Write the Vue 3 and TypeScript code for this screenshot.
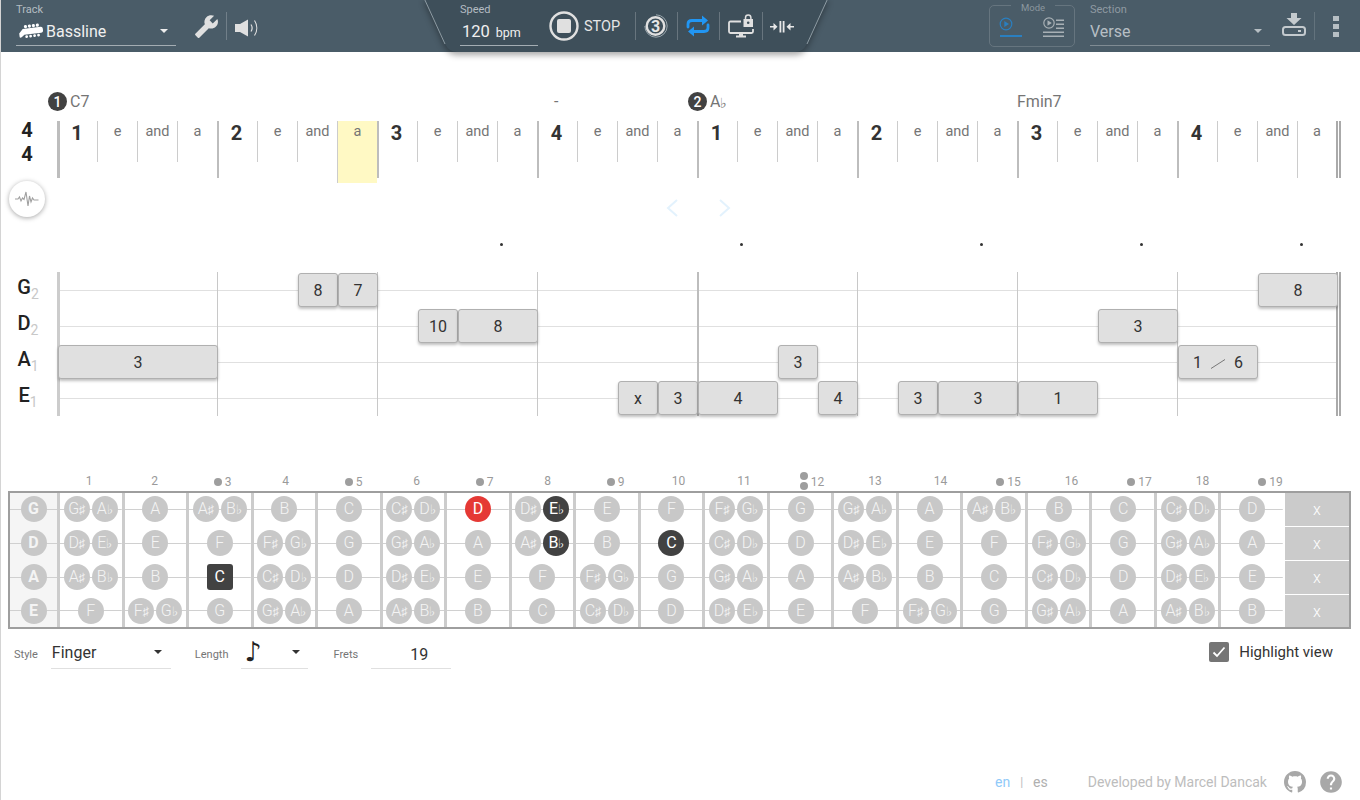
<script setup lang="ts">
const subdivisions = ['', 'e', 'and', 'a']
const beatCells = Array.from({ length: 32 }, (_, i) => ({
  text: i % 4 === 0 ? String((i / 4) % 4 + 1) : subdivisions[i % 4],
  strong: i % 4 === 0,
  first: i === 0,
  last: i === 31,
  current: i === 7
}))

const dots = [11, 17, 23, 27, 31]

const strings = [
  { name: 'G', octave: 2, open: 7 },
  { name: 'D', octave: 2, open: 2 },
  { name: 'A', octave: 1, open: 9 },
  { name: 'E', octave: 1, open: 4 }
]

const tabNotes = [
  { row: 0, col: 6, span: 1, text: '8' },
  { row: 0, col: 7, span: 1, text: '7' },
  { row: 0, col: 30, span: 2, text: '8' },
  { row: 1, col: 9, span: 1, text: '10' },
  { row: 1, col: 10, span: 2, text: '8' },
  { row: 1, col: 26, span: 2, text: '3' },
  { row: 2, col: 0, span: 4, text: '3' },
  { row: 2, col: 18, span: 1, text: '3' },
  { row: 2, col: 28, span: 2, text: '1', slide: '6' },
  { row: 3, col: 14, span: 1, text: 'x' },
  { row: 3, col: 15, span: 1, text: '3' },
  { row: 3, col: 16, span: 2, text: '4' },
  { row: 3, col: 19, span: 1, text: '4' },
  { row: 3, col: 21, span: 1, text: '3' },
  { row: 3, col: 22, span: 2, text: '3' },
  { row: 3, col: 24, span: 2, text: '1' }
]

const scale = [
  ['C'], ['C#', 'Db'], ['D'], ['D#', 'Eb'], ['E'], ['F'],
  ['F#', 'Gb'], ['G'], ['G#', 'Ab'], ['A'], ['A#', 'Bb'], ['B']
]

// string-fret-note => style of the marked note
const marked: Record<string, string> = {
  '0-7-D': 'red',
  '0-8-Eb': 'dark',
  '1-8-Bb': 'dark',
  '1-10-C': 'dark',
  '2-3-C': 'dark square'
}

function pretty(acc: string) {
  return acc === '#' ? '♯' : '♭'
}

const frets = Array.from({ length: 19 }, (_, i) => i + 1)
const singleDots = [3, 5, 7, 9, 15, 17, 19]

const boardRows = strings.map((s, row) => ({
  name: s.name,
  frets: frets.map((fret) => ({
    fret,
    notes: scale[(s.open + fret) % 12].map((n) => ({
      letter: n[0],
      acc: n[1] ? pretty(n[1]) : '',
      cls: marked[`${row}-${fret}-${n}`] || ''
    }))
  }))
}))
</script>

<template>
  <div class="page">
    <header class="topbar">
      <div class="bar-left">
        <div class="field track">
          <span class="field-label">Track</span>
          <div class="field-value">
            <svg class="bass" width="26" height="18" viewBox="0 0 26 18">
              <g fill="#fff" transform="rotate(-7 13 9)">
                <path d="M1 10 L5 6 H23 Q25 6 25 8 V10 Q25 12 23 12 H6 L3 14 Q1 15 1 13 Z" />
                <circle cx="8" cy="4" r="1.6" /><circle cx="12" cy="4" r="1.6" />
                <circle cx="16" cy="4" r="1.6" /><circle cx="20" cy="4" r="1.6" />
                <circle cx="8" cy="14" r="1.4" /><circle cx="12" cy="14" r="1.4" />
                <circle cx="16" cy="14" r="1.4" /><circle cx="20" cy="14" r="1.4" />
              </g>
            </svg>
            <span>Bassline</span>
            <i class="caret"></i>
          </div>
        </div>
        <svg class="wrench" width="25" height="25" viewBox="0 0 24 24">
          <path fill="#e0e0e0" transform="translate(24 0) scale(-1 1)" d="M22.7 19l-9.1-9.1c.9-2.3.4-5-1.5-6.9-2-2-5-2.4-7.4-1.3L9 6 6 9 1.6 4.7C.4 7.1.9 10.1 2.9 12.1c1.9 1.9 4.6 2.4 6.9 1.5l9.1 9.1c.4.4 1 .4 1.4 0l2.3-2.3c.5-.4.5-1.1.1-1.4z" />
        </svg>
        <span class="sep left-sep"></span>
        <svg class="speaker" width="24" height="24" viewBox="0 0 24 24">
          <path fill="#e0e0e0" d="M0 10h5l8-4.500v17L5 18H0z" />
          <path fill="none" stroke="#e0e0e0" stroke-width="1.200" d="M16 10.500c1.500 2.300 1.500 4.700 0 7M19.500 6.500c3 4.500 3 10.500 0 15" />
        </svg>
      </div>

      <div class="bar-center">
        <svg class="center-shape" width="408" height="54" viewBox="0 0 408 54">
          <path fill="#3e4f5a" d="M2 -2 L23 44 Q27 52 35 52 H373 Q381 52 385 44 L406 -2 Z" />
          <path fill="none" stroke="#8d9ba3" stroke-width="1" d="M2 -2 L23 44 M385 44 L406 -2" />
        </svg>
        <div class="field speed">
          <span class="field-label">Speed</span>
          <div class="field-value"><span>120</span><small>bpm</small></div>
        </div>
        <svg class="stop" width="30" height="30" viewBox="0 0 30 30">
          <circle cx="15" cy="15" r="13.500" fill="none" stroke="#e0e0e0" stroke-width="2.400" />
          <rect x="8" y="8" width="14" height="14" rx="2" fill="#e0e0e0" />
        </svg>
        <span class="stop-text">STOP</span>
        <span class="sep s1"></span>
        <svg class="count" width="24" height="24" viewBox="0 0 24 24">
          <path fill="none" stroke="#9aa6ad" stroke-width="1" d="M12 .8A11.200 11.200 0 1 1 .8 12" />
          <circle cx="11.500" cy="12" r="8.800" fill="none" stroke="#e0e0e0" stroke-width="2.400" />
          <text x="11.500" y="17.500" text-anchor="middle" class="count-text">3</text>
        </svg>
        <span class="sep s2"></span>
        <svg class="repeat" width="24" height="24" viewBox="0 0 24 24">
          <path fill="none" stroke="#2196f3" stroke-width="2.800" stroke-linecap="round" d="M2 13V10Q2 6.500 6 6.500H17M22 11V14Q22 17.500 18 17.500H7" />
          <path fill="#2196f3" d="M16 1.500 22 6.500 16 11.500zM8 12.500 2 17.500 8 22.500z" />
        </svg>
        <span class="sep s3"></span>
        <svg class="lock" width="26" height="24" viewBox="0 0 26 24">
          <path fill="none" stroke="#e0e0e0" stroke-width="1.800" d="M13 7.500H2.500Q1 7.500 1 9V17.500Q1 19 2.500 19H23.500Q25 19 25 17.500V15" />
          <path fill="#e0e0e0" d="M11 19h4v2.500h3V23.500H8v-2h3z" />
          <path fill="none" stroke="#e0e0e0" stroke-width="1.500" d="M17.500 5V3.800a2.700 2.700 0 0 1 5.400 0V5" />
          <path fill="#e0e0e0" fill-rule="evenodd" d="M15.500 5h9.500v8h-9.500zM20.200 7.400a1.300 1.300 0 1 0 0 2.600 1.300 1.300 0 0 0 0-2.600z" />
        </svg>
        <span class="sep s4"></span>
        <svg class="squeeze" width="24" height="24" viewBox="0 0 24 24">
          <path fill="#e8e8e8" d="M0 12h3.500V9l4 3.750-4 3.750v-3H0zM24 12h-3.500V9l-4 3.750 4 3.750v-3H24zM9.500 7h1.800v11.500H9.500zM12.700 7h1.800v11.500h-1.800z" />
        </svg>
      </div>

      <div class="bar-right">
        <div class="mode">
          <span class="mode-label">Mode</span>
          <div class="mode-item active">
            <svg width="14" height="14" viewBox="0 0 14 14">
              <circle cx="7" cy="7" r="5.800" fill="none" stroke="#2a7fc0" stroke-width="1.200" />
              <path fill="#2a7fc0" d="M5.300 4 10 7l-4.700 3z" />
            </svg>
          </div>
          <div class="mode-item">
            <svg width="22" height="22" viewBox="0 0 22 22">
              <circle cx="6" cy="7" r="5.200" fill="none" stroke="#a8b0b5" stroke-width="1.200" />
              <path fill="#a8b0b5" d="M4.500 4.300 8.800 7l-4.300 2.700zM13 3.500h8V5h-8zM13 7.500h8V9h-8zM13 11.500h8V13h-8zM0 15.500h21V17H0zM0 19.500h21V21H0z" />
            </svg>
          </div>
        </div>
        <div class="field section">
          <span class="field-label">Section</span>
          <div class="field-value"><span>Verse</span><i class="caret"></i></div>
        </div>
        <svg class="download" width="24" height="24" viewBox="0 0 24 24">
          <path fill="#c4cace" d="M9 0h6v5h4.500L12 12 4.500 5H9z" />
          <rect x="1" y="14" width="22" height="8" rx="2.500" fill="none" stroke="#c4cace" stroke-width="2" />
          <rect x="16" y="17" width="3" height="2" fill="#c4cace" />
        </svg>
        <span class="sep dim"></span>
        <div class="kebab"><i></i><i></i><i></i></div>
      </div>
    </header>

    <section class="chords">
      <span class="chord shift"><b class="num">1</b>C7</span>
      <span class="chord dash" style="grid-column: 13">-</span>
      <span class="chord shift" style="grid-column: 17"><b class="num">2</b>A<small>♭</small></span>
      <span class="chord" style="grid-column: 25 / span 3">Fmin7</span>
    </section>

    <section class="beats">
      <div class="time-sig"><span>4</span><span>4</span></div>
      <div
        v-for="(c, i) in beatCells"
        :key="i"
        class="beat"
        :class="{ strong: c.strong, first: c.first, last: c.last, current: c.current }"
      >{{ c.text }}</div>
    </section>

    <section class="tools">
      <button class="wave">
        <svg width="24" height="16" viewBox="0 0 24 16">
          <path fill="none" stroke="#a0a0a0" stroke-width="1.100" d="M0 8h3l1.500-2 1.500 4 1.500-3 1.500 1.500L11 1l2 14 1.500-10 1.500 6 1.500-4 1.500 2h4.500" />
        </svg>
      </button>
      <div class="arrows">
        <svg width="16" height="20" viewBox="0 0 16 20"><path fill="none" stroke="#e3f2fd" stroke-width="2" d="M13 2 4 10l9 8" /></svg>
        <svg width="16" height="20" viewBox="0 0 16 20"><path fill="none" stroke="#e3f2fd" stroke-width="2" d="M3 2l9 8-9 8" /></svg>
      </div>
    </section>

    <section class="dots">
      <i v-for="d in dots" :key="d" :style="{ gridColumn: d + 1 }"></i>
    </section>

    <section class="tab">
      <div
        v-for="(s, r) in strings"
        :key="s.name"
        class="string-name"
        :style="{ gridRow: r + 1 }"
      >{{ s.name }}<sub>{{ s.octave }}</sub></div>
      <div v-for="(s, r) in strings" :key="s.name + 'line'" class="string-line" :style="{ gridRow: r + 1 }"></div>
      <div
        v-for="n in 9"
        :key="n"
        class="bar-line"
        :class="{ first: n === 1, mid: n === 5, end: n === 9 }"
        :style="{ gridColumn: n === 9 ? 33 : (n - 1) * 4 + 2 }"
      ></div>
      <div
        v-for="(n, i) in tabNotes"
        :key="i"
        class="tab-note"
        :style="{ gridRow: n.row + 1, gridColumn: `${n.col + 2} / span ${n.span}` }"
      >
        <span>{{ n.text }}</span>
        <template v-if="n.slide">
          <svg class="slide" width="16" height="10" viewBox="0 0 16 10"><path stroke="#777" stroke-width="1" d="M1 9.500 15 .5" /></svg>
          <span>{{ n.slide }}</span>
        </template>
      </div>
    </section>

    <section class="fret-numbers">
      <div
        v-for="f in frets"
        :key="f"
        class="fret-number"
        :class="{ marked: singleDots.includes(f) || f === 12 }"
      >
        <i v-if="singleDots.includes(f)" class="inlay"></i>
        <span v-if="f === 12" class="double"><i class="inlay"></i><i class="inlay"></i></span>
        <span>{{ f }}</span>
      </div>
    </section>

    <section class="board">
      <div class="board-grid">
        <template v-for="(row, r) in boardRows" :key="r">
          <div class="cell open"><span class="note bold">{{ row.name }}</span></div>
          <div v-for="f in row.frets" :key="f.fret" class="cell">
            <span v-for="n in f.notes" :key="n.letter" class="note" :class="n.cls">{{ n.letter }}<small v-if="n.acc">{{ n.acc }}</small></span>
          </div>
          <div class="mute">x</div>
        </template>
      </div>
    </section>

    <section class="controls">
      <span class="ctl-label style-label">Style</span>
      <div class="ctl finger"><span>Finger</span><i class="caret dark"></i></div>
      <span class="ctl-label length-label">Length</span>
      <div class="ctl length"><span class="eighth">♪</span><i class="caret dark"></i></div>
      <span class="ctl-label frets-label">Frets</span>
      <div class="ctl frets-input">19</div>
      <label class="highlight">
        <span class="check">
          <svg width="14" height="12" viewBox="0 0 14 12"><path fill="none" stroke="#fff" stroke-width="1.800" d="M1.500 6.500 5 10l7.500-8.500" /></svg>
        </span>
        Highlight view
      </label>
    </section>

    <footer class="footer">
      <span class="lang on">en</span>
      <span class="pipe">|</span>
      <span class="lang">es</span>
      <span class="credit">Developed by Marcel Dancak</span>
      <svg width="22" height="22" viewBox="0 0 16 16">
        <path fill="#a8a8a8" d="M8 0C3.580 0 0 3.580 0 8c0 3.540 2.290 6.530 5.470 7.590.4.070.55-.17.55-.38 0-.19-.01-.82-.01-1.490-2.010.37-2.530-.49-2.690-.94-.09-.23-.48-.94-.82-1.130-.28-.15-.68-.52-.01-.53.63-.01 1.080.58 1.230.82.72 1.210 1.870.87 2.330.66.07-.52.28-.87.51-1.070-1.780-.2-3.640-.89-3.640-3.950 0-.87.31-1.590.82-2.150-.08-.2-.36-1.020.08-2.120 0 0 .67-.21 2.200.82.64-.18 1.320-.27 2-.27.68 0 1.360.09 2 .27 1.530-1.040 2.200-.82 2.200-.82.44 1.100.16 1.920.08 2.120.51.56.82 1.270.82 2.150 0 3.070-1.870 3.750-3.650 3.950.29.25.54.73.54 1.480 0 1.070-.01 1.930-.01 2.200 0 .21.15.46.55.38A8.013 8.013 0 0016 8c0-4.420-3.580-8-8-8z" />
      </svg>
      <svg class="help" width="26" height="26" viewBox="0 0 24 24">
        <path fill="#a8a8a8" d="M12 2C6.480 2 2 6.480 2 12s4.480 10 10 10 10-4.480 10-10S17.520 2 12 2zm1 17h-2v-2h2v2zm2.070-7.750l-.9.92C13.450 12.900 13 13.500 13 15h-2v-.5c0-1.100.45-2.100 1.170-2.830l1.240-1.260c.37-.36.59-.86.59-1.410 0-1.100-.9-2-2-2s-2 .9-2 2H8c0-2.210 1.790-4 4-4s4 1.790 4 4c0 .88-.36 1.680-.93 2.250z" />
      </svg>
    </footer>
  </div>
</template>

<style>
html,
body {
  margin: 0;
  background: #fff;
}
</style>

<style scoped>
.page {
  display: flex;
  flex-direction: column;
  box-sizing: border-box;
  width: 1360px;
  height: 800px;
  border-left: 1px solid #d4d4d4;
  overflow: hidden;
  font-family: Roboto, "Liberation Sans", sans-serif;
  color: #333;
}

/* top bar */
.topbar {
  display: flex;
  flex: none;
  height: 52px;
  background: #4a5c68;
  color: #fff;
  position: relative;
  z-index: 2;
}
.bar-left {
  display: flex;
  align-items: center;
  width: 421px;
  padding-left: 15px;
  box-sizing: border-box;
}
.field {
  display: flex;
  flex-direction: column;
  box-sizing: border-box;
  height: 46px;
  align-self: flex-start;
  border-bottom: 1px solid #a4adb3;
}
.field-label {
  font-size: 11px;
  line-height: 13px;
  margin-top: 3px;
  color: #b4bcc2;
}
.field-value {
  display: flex;
  align-items: center;
  flex: 1;
  padding-top: 1px;
  font-size: 16px;
  color: #f0f0f0;
}
.track {
  width: 160px;
}
.bass {
  margin: 0 2px 0 2px;
}
.caret {
  width: 0;
  height: 0;
  margin-left: auto;
  margin-right: 8px;
  border: 4px solid transparent;
  border-top: 4px solid #eee;
  border-bottom: 0;
}
.caret.dark {
  border-top-color: #333;
}
.wrench {
  margin: 0 0 0 18px;
}
.sep {
  width: 1px;
  height: 28px;
  margin: 0 8px;
  background: rgba(255, 255, 255, 0.22);
  flex: none;
}
.left-sep {
  margin: 0 8px 0 7px;
}
.bar-center {
  position: relative;
  display: flex;
  align-items: center;
  width: 408px;
  padding-left: 38px;
  box-sizing: border-box;
}
.center-shape {
  position: absolute;
  top: 0;
  left: 0;
  overflow: visible;
  filter: drop-shadow(0 3px 3px rgba(0, 0, 0, 0.35));
}
.bar-center > *:not(.center-shape) {
  position: relative;
}
.speed {
  width: 78px;
}
.speed .field-value span {
  font-size: 16.500px;
  margin-left: 2px;
}
.speed small {
  font-size: 12.500px;
  margin: 2px 0 0 6px;
}
.stop {
  margin-left: 11px;
}
.stop-text {
  margin-left: 5px;
  font-size: 14.500px;
  color: #e6e6e6;
}
.s1 {
  margin: 0 8px 0 15px;
}
.s2 {
  margin: 0 8px 0 9px;
}
.s3 {
  margin: 0 8px 0 9px;
}
.s4 {
  margin: 0 7px 0 8px;
}
.count-text {
  font-size: 16px;
  font-weight: 700;
  fill: #e6e6e6;
  font-family: Roboto, sans-serif;
}
.bar-right {
  display: flex;
  align-items: center;
  flex: 1;
  padding-left: 159px;
}
.mode {
  position: relative;
  display: flex;
  box-sizing: border-box;
  width: 86px;
  height: 42px;
  padding: 11px 9px 0 10px;
  justify-content: space-between;
  border: 1px solid #66757f;
  border-radius: 5px;
  align-self: flex-start;
  margin-top: 5px;
}
.mode-label {
  position: absolute;
  top: -3px;
  left: 21px;
  padding: 0 10px;
  background: #4a5c68;
  font-size: 9.500px;
  line-height: 10px;
  color: #8b979f;
}
.mode-item {
  width: 22px;
  margin-top: -1px;
}
.mode-item svg {
  display: block;
}
.mode-item.active {
  height: 19px;
  border-bottom: 2px solid #2a7fc0;
}
.mode-item.active svg {
  margin: 1px 0 0 -1px;
}
.section {
  width: 180px;
  margin-left: 15px;
  border-bottom-color: #7f8b93;
}
.section .field-label {
  color: #8f9aa2;
}
.section .field-value {
  color: #b7bfc4;
}
.section .caret {
  border-top-color: #b7bfc4;
}
.download {
  margin-left: 12px;
  margin-top: -2px;
}
.sep.dim {
  background: rgba(255, 255, 255, 0.14);
  margin-left: 8px;
}
.kebab {
  display: flex;
  flex-direction: column;
  gap: 3px;
  margin: 1px 0 0 10px;
}
.kebab i {
  width: 6px;
  height: 5px;
  background: #b7bfc4;
}

/* score */
.beats,
.tab {
  display: grid;
  grid-template-columns: 56px repeat(32, 40px);
}
.chords,
.dots {
  display: grid;
  grid-template-columns: repeat(32, 40px);
  padding-left: 56px;
}
.chords {
  height: 20px;
  margin-top: 37px;
  font-size: 16px;
  line-height: 20px;
  color: #757575;
}
.chord {
  grid-row: 1;
  white-space: nowrap;
  padding-top: 3px;
}
.chord.shift {
  display: flex;
  align-items: center;
  margin-left: -9px;
  padding-top: 1px;
}
.chord small {
  font-size: 14px;
  margin-top: 3px;
}
.dash {
  margin-left: 17px;
}
.num {
  display: inline-flex;
  align-items: center;
  justify-content: center;
  width: 19px;
  height: 19px;
  margin-right: 3px;
  border-radius: 50%;
  background: #424242;
  color: #fff;
  font-size: 14px;
  font-weight: 500;
}
.beats {
  margin-top: 12px;
  height: 57px;
  align-items: start;
}
.time-sig {
  display: flex;
  flex-direction: column;
  width: 52px;
  margin-top: -2px;
  text-align: center;
  font-size: 20px;
  font-weight: 700;
  line-height: 23.500px;
  color: #222;
}
.beat {
  position: relative;
  box-sizing: border-box;
  height: 41px;
  padding-top: 2px;
  border-left: 1px solid #ccc;
  text-align: center;
  font-size: 14.500px;
  line-height: 18px;
  color: #757575;
}
.beat.strong {
  height: 57px;
  padding: 1px 3px 0 0;
  border-left: 2px solid #bdbdbd;
  font-size: 20px;
  font-weight: 700;
  line-height: 23px;
  color: #333;
}
.beat.first {
  border-left-width: 3px;
}
.beat.current {
  height: 62px;
  background: #fff9c4;
}
.beat.last {
  width: 44px;
  height: 57px;
  padding-right: 0;
  border-right: 5px double #aaa;
}
.tools {
  display: flex;
  height: 54px;
  padding-left: 8px;
}
.wave {
  display: flex;
  align-items: center;
  justify-content: center;
  width: 36px;
  height: 36px;
  margin-top: 3px;
  padding: 0;
  border: 0;
  border-radius: 50%;
  background: #fff;
  box-shadow: 0 1px 5px rgba(0, 0, 0, 0.35);
}
.arrows {
  display: flex;
  gap: 37px;
  margin: 20px 0 0 619px;
}
.dots {
  height: 40px;
}
.dots i {
  grid-row: 1;
  width: 3px;
  height: 3px;
  margin: 11px 0 0 3px;
  border-radius: 50%;
  background: #333;
}
.tab {
  grid-template-rows: repeat(4, 36px);
}
.string-name {
  grid-column: 1;
  width: 54px;
  text-align: center;
  font-size: 20px;
  font-weight: 500;
  line-height: 31px;
  color: #222;
}
.string-name sub {
  font-size: 14px;
  font-weight: 400;
  line-height: 0;
  color: #c8c8c8;
}
.string-line {
  grid-column: 2 / -1;
  align-self: center;
  height: 1px;
  background: #e0e0e0;
}
.bar-line {
  grid-row: 1 / -1;
  width: 1px;
  background: #c8c8c8;
}
.bar-line.first {
  width: 3px;
  background: #ccc;
}
.bar-line.mid {
  width: 2px;
  background: #bdbdbd;
}
.bar-line.end {
  margin-left: 39px;
  width: 5px;
  box-sizing: border-box;
  background: none;
  border-left: 2px solid #aaa;
  border-right: 2px solid #aaa;
}
.tab-note {
  display: flex;
  align-items: center;
  justify-content: center;
  align-self: start;
  box-sizing: border-box;
  height: 34px;
  margin: 1px -1px 0 1px;
  border: 1px solid #b0b0b0;
  border-radius: 3px;
  background: #e0e0e0;
  box-shadow: 0 2px 3px rgba(0, 0, 0, 0.25);
  font-size: 16px;
  color: #333;
  position: relative;
}
.slide {
  margin: 3px 8px 0;
}

/* fretboard */
.fret-numbers {
  display: grid;
  grid-template-columns: repeat(19, 65.500px);
  height: 18px;
  margin-top: 57px;
  padding-left: 55.250px;
  font-size: 12px;
  color: #9a9a9a;
}
.fret-number {
  display: flex;
  align-items: center;
  justify-content: center;
  gap: 3px;
  margin-top: -2px;
  line-height: 14px;
}
.fret-number.marked {
  padding-left: 5px;
  margin-top: -1px;
}
.inlay {
  display: block;
  flex: none;
  width: 8px;
  height: 8px;
  border-radius: 50%;
  background: #9e9e9e;
}
.double {
  display: flex;
  flex-direction: column;
  gap: 2px;
  margin-top: -2px;
}
.board-grid {
  display: grid;
  grid-template-columns: 47px repeat(19, 1fr) 66px;
  grid-template-rows: 34px 34px 34px 33px;
  margin-top: -1px;
}
.board {
  box-sizing: border-box;
  width: 1343px;
  height: 138px;
  margin-left: 7px;
  border: 2px solid #9e9e9e;
  overflow: hidden;
}
.cell {
  display: flex;
  align-items: center;
  justify-content: center;
  gap: 2px;
  box-sizing: border-box;
  border-left: 3px solid #ccc;
  background: linear-gradient(#d0d0d0, #d0d0d0) center / 100% 1px no-repeat;
}
.cell.open {
  border-left: 0;
  background: linear-gradient(#d0d0d0, #d0d0d0) center / 100% 1px no-repeat, #f5f5f5;
}
.note {
  display: flex;
  align-items: baseline;
  justify-content: center;
  box-sizing: border-box;
  width: 26px;
  height: 26px;
  padding-top: 4px;
  border-radius: 50%;
  background: #c8c8c8;
  color: #f4f4f4;
  font-size: 16px;
  font-weight: 300;
  line-height: 18px;
}
.note small {
  font-size: 12.500px;
}
.note.bold {
  font-weight: 700;
}
.note.red {
  background: #e53935;
  color: #fff;
  font-weight: 400;
}
.note.dark {
  background: #424242;
  color: #fff;
  font-weight: 400;
}
.note.square {
  border-radius: 3px;
}
.mute {
  display: flex;
  align-items: center;
  justify-content: center;
  box-sizing: border-box;
  border-left: 2px solid #fff;
  border-top: 1px solid #fff;
  background: #cbcbcb;
  color: #fff;
  font-size: 16px;
  font-weight: 300;
}

/* lower controls */
.controls {
  display: flex;
  align-items: flex-start;
  height: 40px;
  margin-top: 11px;
}
.ctl-label {
  margin-top: 8px;
  font-size: 11px;
  line-height: 13px;
  color: #757575;
}
.ctl {
  display: flex;
  align-items: center;
  box-sizing: border-box;
  height: 29px;
  border-bottom: 1px solid #e0e0e0;
  font-size: 16px;
  color: #333;
}
.style-label {
  margin-left: 13px;
}
.finger {
  width: 120px;
  margin-left: 13px;
  padding: 0 1px 4px 1px;
}
.length-label {
  margin-left: 24px;
}
.length {
  width: 67px;
  margin-left: 12px;
  padding: 0 0 4px 4px;
}
.eighth {
  font-family: "DejaVu Sans", sans-serif;
  font-size: 27px;
  line-height: 24px;
  color: #222;
}
.frets-label {
  margin-left: 26px;
}
.frets-input {
  justify-content: center;
  width: 80px;
  margin-left: 13px;
  padding: 0 0 0 16px;
}
.highlight {
  display: flex;
  align-items: center;
  gap: 10px;
  margin: 2px 27px 0 auto;
  font-size: 15px;
  line-height: 20px;
  color: #333;
}
.check {
  display: flex;
  align-items: center;
  justify-content: center;
  width: 20px;
  height: 20px;
  border-radius: 2px;
  background: #757575;
}

/* footer */
.footer {
  display: flex;
  align-items: center;
  margin-top: auto;
  height: 26px;
  padding: 0 0 5px 994px;
  font-size: 14px;
  color: #bdbdbd;
}
.lang {
  color: #b0b0b0;
}
.lang.on {
  color: #90caf9;
}
.pipe {
  margin: 0 10px;
  font-size: 12px;
}
.credit {
  margin: 0 17px 0 40px;
}
.help {
  margin-left: 12px;
}
</style>
